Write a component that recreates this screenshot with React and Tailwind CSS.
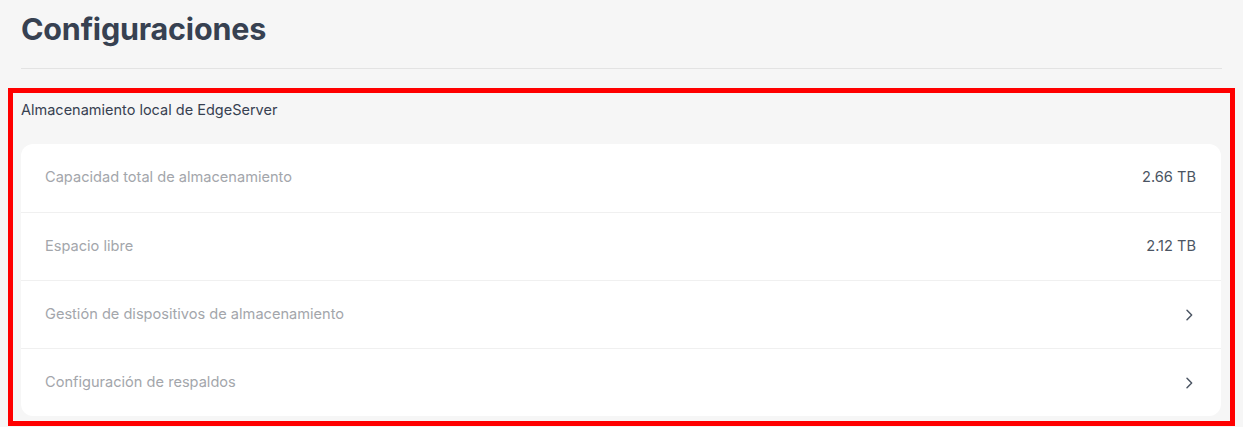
import React from 'react';

const rows = [
  { label: 'Capacidad total de almacenamiento', value: '2.66 TB' },
  { label: 'Espacio libre', value: '2.12 TB' },
  { label: 'Gestión de dispositivos de almacenamiento', link: true },
  { label: 'Configuración de respaldos', link: true },
];

function Chevron() {
  return (
    <svg width="16" height="16" viewBox="0 0 24 24" fill="none" stroke="#4b5563" strokeWidth="2.2" strokeLinecap="round" strokeLinejoin="round">
      <path d="M9 5l7 7-7 7" />
    </svg>
  );
}

export default function App() {
  return (
    <div className="w-[1243px] h-[427px] overflow-hidden bg-[#f6f6f6]" style={{ fontFamily: 'Inter, "Noto Sans", sans-serif' }}>
      <header className="px-[21px]">
        <h1 className="pt-[11px] h-[68px] text-[30.5px] leading-[36px] font-bold text-[#374151] tracking-[-0.2px]">
          Configuraciones
        </h1>
        <div className="border-t border-[#e3e3e3]" />
      </header>

      <section className="mt-[19px] ml-[8px] mr-[8px] border-[5px] border-[#ff0000] pl-[8px] pr-[9px] pb-[5px]">
        <h2 className="h-[51px] pt-[7px] text-[14.5px] leading-[20px] text-[#374151]">
          Almacenamiento local de EdgeServer
        </h2>
        <div className="bg-white rounded-[12px] flex flex-col">
          {rows.map((row, i) => (
            <div
              key={row.label}
              className={`h-[68px] flex items-center justify-between pl-[24px] pr-[25px] ${i > 0 ? 'border-t border-[#f0f0f0]' : ''}`}
            >
              <span className="text-[14.6px] text-[#a3a6ab]">{row.label}</span>
              {row.link ? (
                <span className="-mr-[1px]"><Chevron /></span>
              ) : (
                <span className="text-[14.6px] text-[#4b5563]">{row.value}</span>
              )}
            </div>
          ))}
        </div>
      </section>
    </div>
  );
}
